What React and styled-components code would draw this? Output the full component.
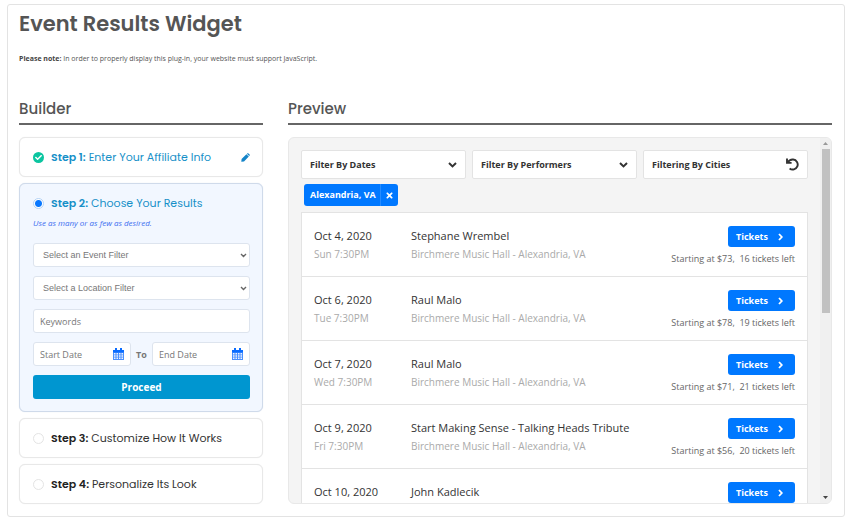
import React, { useState } from "react";
import styled, { createGlobalStyle, css } from "styled-components";
import { FaCheck, FaTimes } from "react-icons/fa";

const heading = `Poppins, Inter, "Liberation Sans", sans-serif`;
const body = `"Open Sans", "Noto Sans", sans-serif`;

const GlobalStyle = createGlobalStyle`
  *, *::before, *::after { box-sizing: border-box; }
  body { margin: 0; background: #fff; color: #555; font-family: ${body}; font-size: 11px; }
  button, input, select { font: inherit; margin: 0; }
  button { cursor: pointer; }
`;

const Page = styled.main`
  margin: 4px 8px 8px 7px;
  padding: 0 12px 12px 11px;
  border: 1px solid #e3e3e3;
  border-radius: 3px;
`;

const Title = styled.h1`
  margin: 0;
  padding-top: 3px;
  font: 600 21px/32px ${heading};
  color: #555;
`;

const Note = styled.p`
  margin: 12px 0 32px;
  font-size: 7px;
  line-height: 14px;
  color: #555;
  strong { color: #444; }
`;

const Columns = styled.div`
  display: grid;
  grid-template-columns: minmax(0, 244fr) minmax(0, 544fr);
  gap: 25px;
`;

const Column = styled.section`
  display: flex;
  flex-direction: column;
`;

const SectionTitle = styled.h2`
  margin: 0 0 12px;
  padding-bottom: 3px;
  border-bottom: 2px solid #666;
  font: 500 15px/22px ${heading};
  color: #555;
`;

const Steps = styled.div`
  display: flex;
  flex-direction: column;
  gap: 6px;
`;

const StepCard = styled.div`
  padding: 0 12px 0 13px;
  border: 1px solid ${(p) => (p.$active ? "#cfdaea" : "#e8e8e8")};
  border-radius: 6px;
  background: ${(p) => (p.$active ? "#f2f7ff" : "#fff")};
  box-shadow: 0 0 1px ${(p) => (p.$active ? "#cfdaea" : "#e8e8e8")};
`;

const StepHeader = styled.div`
  display: flex;
  align-items: center;
  gap: 7px;
  height: 38px;
`;

const StepLabel = styled.label`
  flex: 1;
  font: 400 11px/16px ${heading};
  color: ${(p) => (p.$blue ? "#1790c8" : "#333")};
  white-space: nowrap;
  strong { font-weight: 600; color: ${(p) => (p.$blue ? "#1790c8" : "#222")}; }
`;

const Radio = styled.input`
  appearance: none;
  width: 11px;
  height: 11px;
  flex: none;
  border: 1px solid ${(p) => (p.checked ? "#b5d3f5" : "#e4e4e4")};
  border-radius: 50%;
  background: #fff;
  &:checked { background: radial-gradient(circle, #0a78ff 3px, #fff 4px); }
`;

const Done = styled.span`
  display: grid;
  place-items: center;
  width: 11px;
  height: 11px;
  border-radius: 50%;
  background: #0bc5a0;
  color: #fff;
  font-size: 7px;
`;

const IconButton = styled.button`
  display: grid;
  place-items: center;
  padding: 0;
  border: 0;
  background: none;
  color: ${(p) => p.$color};
  font-size: 9px;
`;

const Hint = styled.p`
  margin: -5px 0 14px;
  font-size: 8px;
  line-height: 12px;
  font-style: italic;
  color: #3a6cf0;
`;

const Form = styled.form`
  display: flex;
  flex-direction: column;
  gap: 9px;
  padding-bottom: 12px;
`;

const field = css`
  width: 100%;
  height: 24px;
  border: 1px solid #dde4ee;
  border-radius: 3px;
  background: #fff;
  color: #777;
`;

const SelectWrap = styled.div`
  position: relative;
  svg {
    position: absolute;
    top: 10px;
    right: 3px;
    pointer-events: none;
  }
`;

const Select = styled.select`
  ${field}
  display: block;
  appearance: none;
  padding: 0 16px 0 9px;
  font: 9px "Liberation Sans", Arial, sans-serif;
`;

const Field = styled.div`
  ${field}
  display: flex;
  align-items: center;
  padding: 0 6px;
`;

const TextInput = styled.input`
  flex: 1;
  min-width: 0;
  padding: 0;
  border: 0;
  outline: 0;
  background: none;
  color: #555;
  font-size: 9px;
  font-weight: 400;
  &::placeholder { color: #777; }
`;

const DateRow = styled.div`
  display: grid;
  grid-template-columns: minmax(0, 1fr) 21px minmax(0, 1fr);
  align-items: center;
  text-align: center;
  font-size: 9px;
  font-weight: 700;
  color: #777;
`;

const Proceed = styled.button`
  height: 24px;
  border: 0;
  border-radius: 3px;
  background: #0096d0;
  color: #fff;
  font-size: 10px;
  font-weight: 700;
`;

const Panel = styled.div`
  display: flex;
  flex: 1;
  contain: size;
  min-height: 360px;
  overflow: hidden;
  border: 1px solid #e8e8e8;
  border-radius: 6px;
  background: #f4f4f4;
`;

const PanelBody = styled.div`
  flex: 1;
  min-width: 0;
  padding: 12px;
`;

const Scrollbar = styled.div`
  display: flex;
  flex-direction: column;
  align-items: center;
  width: 11px;
  padding: 4px 0;
  background: #f0f0f0;
`;

const Thumb = styled.div`
  width: 8px;
  height: 46%;
  margin: 4px 0 auto;
  background: #c1c1c1;
`;

const Filters = styled.div`
  display: grid;
  grid-template-columns: repeat(3, 1fr);
  gap: 6px;
`;

const Filter = styled.button`
  display: flex;
  align-items: center;
  justify-content: space-between;
  height: 29px;
  padding: 0 8px;
  border: 1px solid #e3e3e3;
  border-radius: 2px;
  background: #fff;
  color: #333;
  font-size: 9px;
  font-weight: 700;
`;

const Tag = styled.div`
  display: inline-flex;
  height: 22px;
  margin: 5px 3px 6px;
  border-radius: 3px;
  overflow: hidden;
  background: #0078ff;
  color: #fff;
  font-size: 9px;
  line-height: 22px;
  font-weight: 700;
  vertical-align: top;
`;

const TagText = styled.span`
  padding: 0 4px 0 6px;
  border-right: 1px solid #268cff;
`;

const TagClose = styled(IconButton)`
  width: 17px;
`;

const Events = styled.ul`
  margin: 0;
  padding: 0;
  list-style: none;
  border: 1px solid #e3e3e3;
  background: #fff;
`;

const Event = styled.li`
  display: grid;
  grid-template-columns: 97px minmax(0, 1fr) auto;
  height: 64px;
  padding: 13px 12px 0;
  border-bottom: 1px solid #e3e3e3;
`;

const Details = styled.div`
  padding-top: 1px;
  font-size: 11px;
  line-height: 18px;
  color: #333;
`;

const Muted = styled.div`
  font-size: 10px;
  color: #aaa;
`;

const Offer = styled.div`
  display: flex;
  flex-direction: column;
  align-items: flex-end;
  gap: 5px;
  font-size: 9px;
  line-height: 14px;
  color: #666;
  white-space: pre;
`;

const Tickets = styled.button`
  display: flex;
  align-items: center;
  gap: 8px;
  width: 67px;
  height: 21px;
  padding: 0 8px;
  border: 0;
  border-radius: 3px;
  background: #0078ff;
  color: #fff;
  font-size: 9px;
  font-weight: 700;
`;

const Calendar = () => (
  <svg width="11" height="12" viewBox="0 0 11 12">
    <path d="M0 2h11v10H0z" fill="#4a90ff" />
    <path d="M0 2h11v2.4H0zM2 0h2v3H2zM7 0h2v3H7z" fill="#0a6cff" />
    <path d="M1 5h1.5v1.5H1zM3.5 5H5v1.5H3.5zM6 5h1.5v1.5H6zM8.5 5H10v1.5H8.5zM1 7.3h1.5v1.5H1zM3.5 7.3H5v1.5H3.5zM6 7.3h1.5v1.5H6zM8.5 7.3H10v1.5H8.5zM1 9.6h1.5V11H1zM3.5 9.6H5V11H3.5zM6 9.6h1.5V11H6zM8.5 9.6H10V11H8.5z" fill="#eef4ff" />
  </svg>
);

const Pen = () => (
  <svg width="9" height="9" viewBox="0 0 9 9" fill="currentColor">
    <path d="M0.6 6L5.4 1.2L7.8 3.6L3 8.4L0.3 8.7zM5.9 0.8L6.5 0.3Q7 0 7.5 0.4L8.6 1.5Q9 2 8.7 2.5L8.2 3.1z" />
  </svg>
);

const Undo = () => (
  <svg width="13" height="13" viewBox="0 0 13 13" fill="none" stroke="#333" strokeWidth="1.9">
    <path d="M1 0.5V4.9H5.6" />
    <path d="M1.6 4.6C3 2.2 5.2 1.3 7.2 1.5A5 5 0 1 1 3.6 10.4" />
  </svg>
);

const SelectArrow = () => (
  <svg width="7" height="5" viewBox="0 0 7 5" fill="none" stroke="#666" strokeWidth="1.4">
    <path d="M1 1l2.5 2.5L6 1" />
  </svg>
);

const ChevronDown = () => (
  <svg width="9" height="6" viewBox="0 0 9 6" fill="none" stroke="#333" strokeWidth="2">
    <path d="M1 1l3.5 3.4L8 1" />
  </svg>
);

const ChevronRight = () => (
  <svg width="5" height="8" viewBox="0 0 5 8" fill="none" stroke="#fff" strokeWidth="1.8">
    <path d="M1 1l2.8 3L1 7" />
  </svg>
);

const Arrow = ({ down }) => (
  <svg width="5" height="3" viewBox="0 0 5 3">
    <path d={down ? "M0 0h5L2.5 3z" : "M0 3h5L2.5 0z"} fill={down ? "#444" : "#999"} />
  </svg>
);

const venue = "Birchmere Music Hall - Alexandria, VA";

const events = [
  { date: "Oct 4, 2020", time: "Sun 7:30PM", name: "Stephane Wrembel", venue, price: 73, left: 16 },
  { date: "Oct 6, 2020", time: "Tue 7:30PM", name: "Raul Malo", venue, price: 78, left: 19 },
  { date: "Oct 7, 2020", time: "Wed 7:30PM", name: "Raul Malo", venue, price: 71, left: 21 },
  { date: "Oct 9, 2020", time: "Fri 7:30PM", name: "Start Making Sense - Talking Heads Tribute", venue, price: 56, left: 20 },
  { date: "Oct 10, 2020", name: "John Kadlecik" },
];

function FilterSelect({ label }) {
  return (
    <SelectWrap>
      <Select aria-label={label}>
        <option>{label}</option>
      </Select>
      <SelectArrow />
    </SelectWrap>
  );
}

function DateField({ label }) {
  return (
    <Field>
      <TextInput aria-label={label} placeholder={label} />
      <IconButton type="button" aria-label={`Pick ${label}`}>
        <Calendar />
      </IconButton>
    </Field>
  );
}

function StepChoice({ number, title, step, onStep }) {
  const id = `step-${number}`;
  return (
    <StepHeader>
      <Radio type="radio" name="step" id={id} checked={step === number} onChange={() => onStep(number)} />
      <StepLabel htmlFor={id} $blue={number === 2}>
        <strong>Step {number}:</strong> {title}
      </StepLabel>
    </StepHeader>
  );
}

function EventRow({ date, time, name, venue, price, left }) {
  return (
    <Event>
      <Details>
        {date}
        {time && <Muted>{time}</Muted>}
      </Details>
      <Details>
        {name}
        {venue && <Muted>{venue}</Muted>}
      </Details>
      <Offer>
        <Tickets>Tickets <ChevronRight /></Tickets>
        {price && <span>{`Starting at $${price},  ${left} tickets left`}</span>}
      </Offer>
    </Event>
  );
}

export default function App() {
  const [step, setStep] = useState(2);
  return (
    <>
      <GlobalStyle />
      <Page>
        <Title>Event Results Widget</Title>
        <Note>
          <strong>Please note:</strong> In order to properly display this plug-in, your website must support JavaScript.
        </Note>
        <Columns>
          <Column>
            <SectionTitle>Builder</SectionTitle>
            <Steps>
              <StepCard>
                <StepHeader>
                  <Done><FaCheck /></Done>
                  <StepLabel as="span" $blue>
                    <strong>Step 1:</strong> Enter Your Affiliate Info
                  </StepLabel>
                  <IconButton type="button" aria-label="Edit step 1" $color="#1484c8">
                    <Pen />
                  </IconButton>
                </StepHeader>
              </StepCard>
              <StepCard $active>
                <StepChoice number={2} title="Choose Your Results" step={step} onStep={setStep} />
                <Hint>Use as many or as few as desired.</Hint>
                <Form onSubmit={(e) => e.preventDefault()}>
                  <FilterSelect label="Select an Event Filter" />
                  <FilterSelect label="Select a Location Filter" />
                  <Field>
                    <TextInput aria-label="Keywords" placeholder="Keywords" />
                  </Field>
                  <DateRow>
                    <DateField label="Start Date" />
                    <span>To</span>
                    <DateField label="End Date" />
                  </DateRow>
                  <Proceed>Proceed</Proceed>
                </Form>
              </StepCard>
              <StepCard>
                <StepChoice number={3} title="Customize How It Works" step={step} onStep={setStep} />
              </StepCard>
              <StepCard>
                <StepChoice number={4} title="Personalize Its Look" step={step} onStep={setStep} />
              </StepCard>
            </Steps>
          </Column>
          <Column>
            <SectionTitle>Preview</SectionTitle>
            <Panel>
              <PanelBody>
                <Filters>
                  <Filter>Filter By Dates <ChevronDown /></Filter>
                  <Filter>Filter By Performers <ChevronDown /></Filter>
                  <Filter>Filtering By Cities <Undo /></Filter>
                </Filters>
                <Tag>
                  <TagText>Alexandria, VA</TagText>
                  <TagClose aria-label="Remove Alexandria, VA" $color="#fff"><FaTimes /></TagClose>
                </Tag>
                <Events>
                  {events.map((event) => <EventRow key={event.date} {...event} />)}
                </Events>
              </PanelBody>
              <Scrollbar aria-hidden="true">
                <Arrow />
                <Thumb />
                <Arrow down />
              </Scrollbar>
            </Panel>
          </Column>
        </Columns>
      </Page>
    </>
  );
}
